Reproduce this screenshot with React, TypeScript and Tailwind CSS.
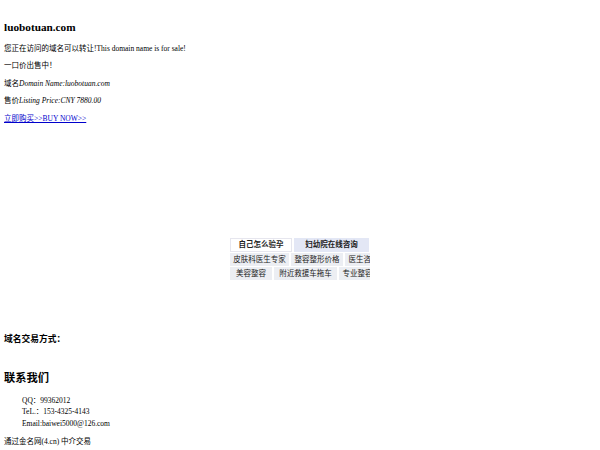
import React from 'react';

const serif = { fontFamily: '"Liberation Serif", "Noto Sans CJK SC", serif' };

const rows = [
  [
    { t: '皮肤科医生专家', w: 'w-[59px]' },
    { t: '整容整形价格', w: 'w-[52px]' },
    { t: '医生咨询在线', w: 'w-[52px]' },
  ],
  [
    { t: '美容整容', w: 'w-[42px]' },
    { t: '附近救援车拖车', w: 'w-[63px]' },
    { t: '专业整容医院', w: 'w-[52px]' },
  ],
];

const AdBox: React.FC = () => (
  <div className="mx-auto w-[140px] overflow-hidden text-[7.5px] leading-[13px] text-[#222]">
    <div className="flex gap-[2px] whitespace-nowrap">
      <div className="w-[62px] shrink-0 bg-white border border-[#e6e6ee] leading-[12px] text-center font-bold">自己怎么验孕</div>
      <div className="w-[75px] shrink-0 bg-[#e3e7f5] leading-[14px] text-center font-bold">妇幼院在线咨询</div>
    </div>
    {rows.map((row, i) => (
      <div key={i} className="flex gap-[2px] mt-[1px] whitespace-nowrap">
        {row.map(c => (
          <div key={c.t} className={`${c.w} shrink-0 bg-[#eceef3] text-center`}>
            {c.t}
          </div>
        ))}
      </div>
    ))}
  </div>
);

export default function App() {
  return (
    <div className="w-[600px] h-[450px] overflow-hidden bg-white text-black px-[4px] pt-[21px]" style={serif}>
      <h1 className="text-[11.25px] leading-[13px] font-bold">luobotuan.com</h1>

      <p className="mt-[9.5px] text-[7.5px] leading-[9px]">您正在访问的域名可以转让!This domain name is for sale!</p>
      <p className="mt-[8.5px] text-[7.5px] leading-[9px]">一口价出售中！</p>
      <p className="mt-[8.5px] text-[7.5px] leading-[9px]">
        域名<i>Domain Name:luobotuan.com</i>
      </p>
      <p className="mt-[8.5px] text-[7.5px] leading-[9px]">
        售价<i>Listing Price:CNY 7880.00</i>
      </p>
      <p className="mt-[8.5px] text-[7.5px] leading-[9px]">
        <a href="#" className="text-[#0000cc] underline">立即购买&gt;&gt;BUY NOW&gt;&gt;</a>
      </p>

      {/* ad frame */}
      <div className="h-[115px]" />
      <AdBox />

      <h3 className="mt-[54px] text-[8.75px] leading-[10px] font-bold">域名交易方式：</h3>

      <h2 className="mt-[28px] text-[11.25px] leading-[13px] font-bold">联系我们</h2>

      <ul className="mt-[10px] pl-[18px] text-[7.5px] leading-[11.7px]">
        <li>QQ：99362012</li>
        <li>TeL.：153-4325-4143</li>
        <li>Email:baiwei5000@126.com</li>
      </ul>

      <p className="mt-[7px] text-[7.5px] leading-[9px]">通过金名网(4.cn) 中介交易</p>
    </div>
  );
}
